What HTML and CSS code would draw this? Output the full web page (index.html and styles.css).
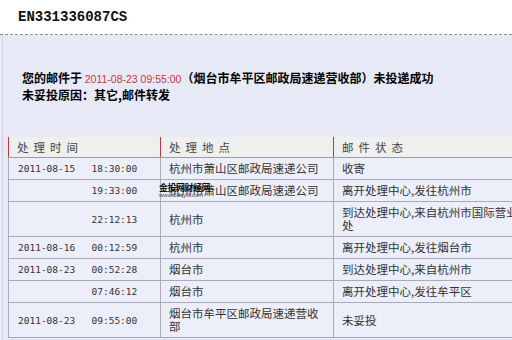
FILE: index.html
```html
<!DOCTYPE html>
<html lang="zh">
<head>
<meta charset="utf-8">
<title>EN331336087CS</title>
<link rel="stylesheet" href="styles.css">
</head>
<body>
<div class="top"><h1 class="code">EN331336087CS</h1></div>
<div class="main">
  <div class="inner">
    <div class="msg">
      <p>您的邮件于 <span class="date">2011-08-23 09:55:00</span>（烟台市牟平区邮政局速递营收部）未投递成功</p>
      <p>未妥投原因：其它,邮件转发</p>
    </div>
    <table class="track">
      <colgroup><col class="c-date"><col class="c-time"><col class="c-place"><col class="c-status"></colgroup>
      <thead>
        <tr><th colspan="2">处理时间</th><th>处理地点</th><th>邮件状态</th></tr>
      </thead>
      <tbody>
        <tr><td class="num first">2011-08-15</td><td class="num">18:30:00</td><td>杭州市萧山区邮政局速递公司</td><td>收寄</td></tr>
        <tr><td class="num first"></td><td class="num">19:33:00</td><td class="wm-cell">杭州市萧山区邮政局速递公司<span class="wm"><b>金投网财经网</b><i>www.5bqyill.com</i></span></td><td>离开处理中心,发往杭州市</td></tr>
        <tr><td class="num first"></td><td class="num">22:12:13</td><td>杭州市</td><td>到达处理中心,来自杭州市国际营业处</td></tr>
        <tr><td class="num first">2011-08-16</td><td class="num">00:12:59</td><td>杭州市</td><td>离开处理中心,发往烟台市</td></tr>
        <tr><td class="num first">2011-08-23</td><td class="num">00:52:28</td><td>烟台市</td><td>到达处理中心,来自杭州市</td></tr>
        <tr><td class="num first"></td><td class="num">07:46:12</td><td>烟台市</td><td>离开处理中心,发往牟平区</td></tr>
        <tr><td class="num first">2011-08-23</td><td class="num">09:55:00</td><td>烟台市牟平区邮政局速递营收部</td><td>未妥投</td></tr>
      </tbody>
    </table>
  </div>
</div>
</body>
</html>
```
FILE: styles.css
```css
html, body {
  margin: 0;
  padding: 0;
}
body {
  width: 512px;
  height: 340px;
  overflow: hidden;
  background: #e7e9f6;
  font-family: "Noto Sans CJK SC", "Liberation Sans", sans-serif;
  color: #222;
}
.top {
  background: #fff;
  height: 35px;
  box-sizing: border-box;
  border-bottom: 1px dashed #8c8c8c;
  padding: 0 18px;
}
.code {
  margin: 0;
  font-family: "Liberation Mono", monospace;
  font-size: 14px;
  font-weight: bold;
  line-height: 34px;
  color: #111;
}
.main {
  padding-left: 2px;
}
.inner {
  border-left: 1px solid #d3d5e4;
  padding: 35px 0 0 5px;
  min-height: 300px;
}
.msg {
  padding-left: 14px;
  font-size: 12px;
  font-weight: bold;
  line-height: 15px;
  color: #000;
}
.msg p {
  margin: 0;
}
.date {
  font-family: "Liberation Sans", sans-serif;
  font-weight: normal;
  font-size: 10.5px;
  color: #d2323c;
}
.track {
  margin-top: 35px;
  border-collapse: collapse;
  table-layout: fixed;
  width: 522px;
  font-size: 11.5px;
  color: #333;
  border-left: 1px solid #a6a8b4;
  border-bottom: 1px solid #a6a8b4;
}
.c-date { width: 75px; }
.c-time { width: 77px; }
.c-place { width: 173px; }
.c-status { width: 197px; }
.track th {
  background: #efefed;
  font-weight: normal;
  text-align: left;
  letter-spacing: 5px;
  color: #444;
  padding: 4px 8px 3px;
  line-height: 13px;
  border-left: 1px solid #c8323c;
  border-bottom: 1px solid #9a9ca6;
}
.track td {
  background: #eceef9;
  padding: 4px 8px;
  line-height: 13px;
  border-bottom: 1px solid #a9abb7;
  border-left: 1px solid #a9abb7;
  vertical-align: middle;
}
.track td.num {
  font-family: "DejaVu Sans Mono", monospace;
  font-size: 9.5px;
  color: #333;
}
.track td.num + td.num {
  border-left: none;
}
.track td.first {
  padding-left: 9px;
}
.wm-cell {
  position: relative;
}
.wm {
  position: absolute;
  left: -2px;
  top: 3px;
  display: flex;
  flex-direction: column;
  line-height: 9px;
  pointer-events: none;
}
.wm b {
  font-size: 9px;
  color: #111;
  letter-spacing: -0.5px;
}
.wm i {
  font-style: normal;
  font-family: "Liberation Sans", sans-serif;
  font-size: 6px;
  line-height: 7px;
  color: #444;
}
```
